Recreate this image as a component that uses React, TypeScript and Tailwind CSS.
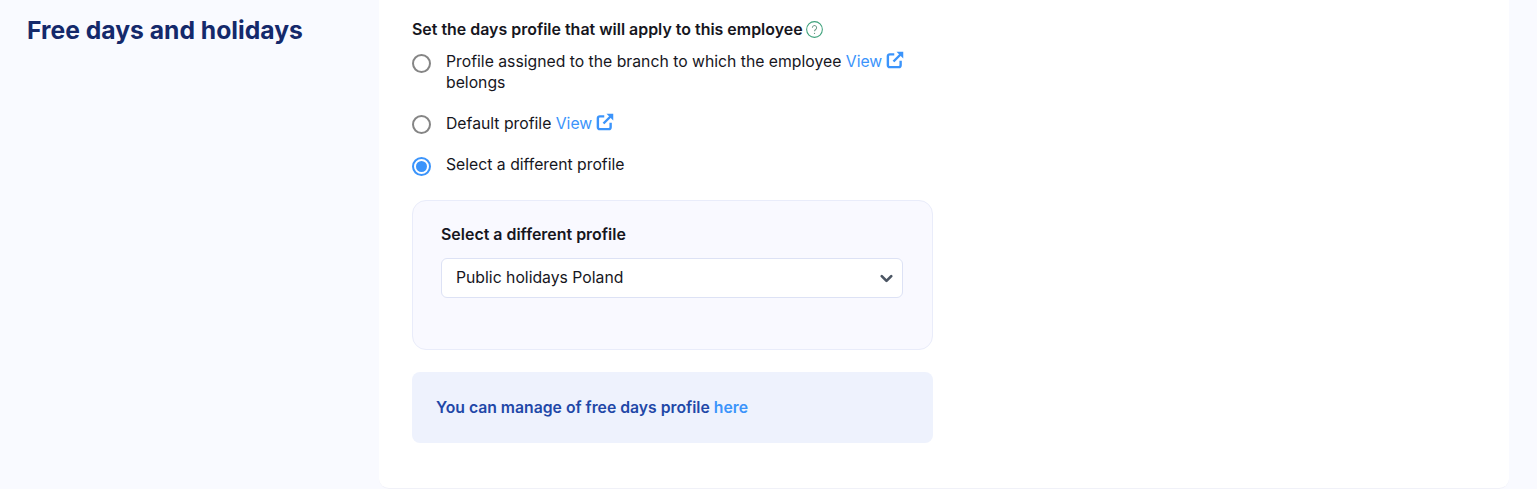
import React from 'react';
import { ChevronDown } from 'lucide-react';

const ViewLink: React.FC = () => (
  <a className="text-[#3b94fb]">
    View
    <svg viewBox="0 0 24 24" className="inline-block w-[18px] h-[18px] ml-[4px] align-[-2px]" fill="none" stroke="#3b94fb" strokeWidth="3.2" strokeLinejoin="round">
      <path d="M11 4.500H5a2.500 2.500 0 0 0-2.500 2.500v12A2.500 2.500 0 0 0 5 21.500h12a2.500 2.500 0 0 0 2.500-2.500v-6" />
      <path d="M10 14 20 4" />
      <path d="M14 1h9v9z" fill="#3b94fb" stroke="none" />
    </svg>
  </a>
);

interface RadioProps {
  checked?: boolean;
  raised?: boolean;
  children: React.ReactNode;
}

const Radio: React.FC<RadioProps> = ({ checked, raised, children }) => (
  <label className="flex items-start">
    {checked ? (
      <span className="mt-[3px] -mb-[1px] w-[19px] h-[19px] shrink-0 rounded-full border-2 border-[#3b94fb] flex items-center justify-center">
        <span className="w-[11px] h-[11px] rounded-full bg-[#3b94fb]" />
      </span>
    ) : (
      <span className={raised ? 'mt-[2px] w-[19px] h-[19px] shrink-0 rounded-full border-2 border-[#858585]' : 'mt-[3px] -mb-[1px] w-[19px] h-[19px] shrink-0 rounded-full border-2 border-[#858585]'} />
    )}
    <span className="ml-[15px] w-[470px] text-[15.75px] leading-[21px] text-[#16161d]">{children}</span>
  </label>
);

const App: React.FC = () => {
  return (
    <div className="w-[1537px] h-[489px] overflow-hidden bg-[#f9faff] flex font-['Inter',sans-serif]">
      <div className="w-[379px] shrink-0 pl-[27px] pt-[14px]">
        <h2 className="text-[24.7px] leading-[32px] font-bold text-[#14296b]">Free days and holidays</h2>
      </div>
      <div className="w-[1130px] h-[489px] bg-white rounded-b-[10px] border-b border-[#f0f1f8] pl-[33px] pt-[19px]">
        <div className="w-[521px]">
          <div className="flex items-center text-[15.95px] leading-[21px] font-semibold text-[#16161d]">
            Set the days profile that will apply to this employee
            <svg viewBox="0 0 16 16" className="w-[17px] h-[17px] ml-[3px]" fill="none" stroke="#3fa27c" strokeWidth="1">
              <circle cx="8" cy="8" r="7.400" />
              <path d="M6 6.300a2 2 0 1 1 3.100 1.700c-.7.5-1.100.9-1.100 1.700" stroke="#6f9c8a" />
              <circle cx="8" cy="11.700" r="0.600" fill="#6f9c8a" stroke="none" />
            </svg>
          </div>
          <div className="mt-[11px] flex flex-col gap-[20px]">
            <Radio>
              Profile assigned to the branch to which the employee <ViewLink /> belongs
            </Radio>
            <Radio raised>
              Default profile <ViewLink />
            </Radio>
            <Radio checked>Select a different profile</Radio>
          </div>
          <div className="mt-[25px] h-[150px] rounded-[14px] border border-[#e9ecfa] bg-[#f9f9ff] pl-[28px] pr-[29px] pt-[23px]">
            <div className="text-[15.95px] leading-[21px] font-semibold text-[#16161d]">Select a different profile</div>
            <div className="mt-[13px] h-[40px] rounded-[6px] border border-[#dde2f5] bg-white pl-[14px] pr-[6px] flex items-center justify-between">
              <span className="text-[15.75px] text-[#16161d]">Public holidays Poland</span>
              <ChevronDown size={19} strokeWidth={3.4} className="text-[#4b5563]" />
            </div>
          </div>
          <div className="mt-[22px] h-[71px] rounded-[8px] bg-[#eef2fd] pl-[24px] flex items-center text-[15.75px] font-semibold text-[#1f48a8]">
            You can manage of free days profile&nbsp;<a className="text-[#3b94fb]">here</a>
          </div>
        </div>
      </div>
    </div>
  );
};

export default App;
